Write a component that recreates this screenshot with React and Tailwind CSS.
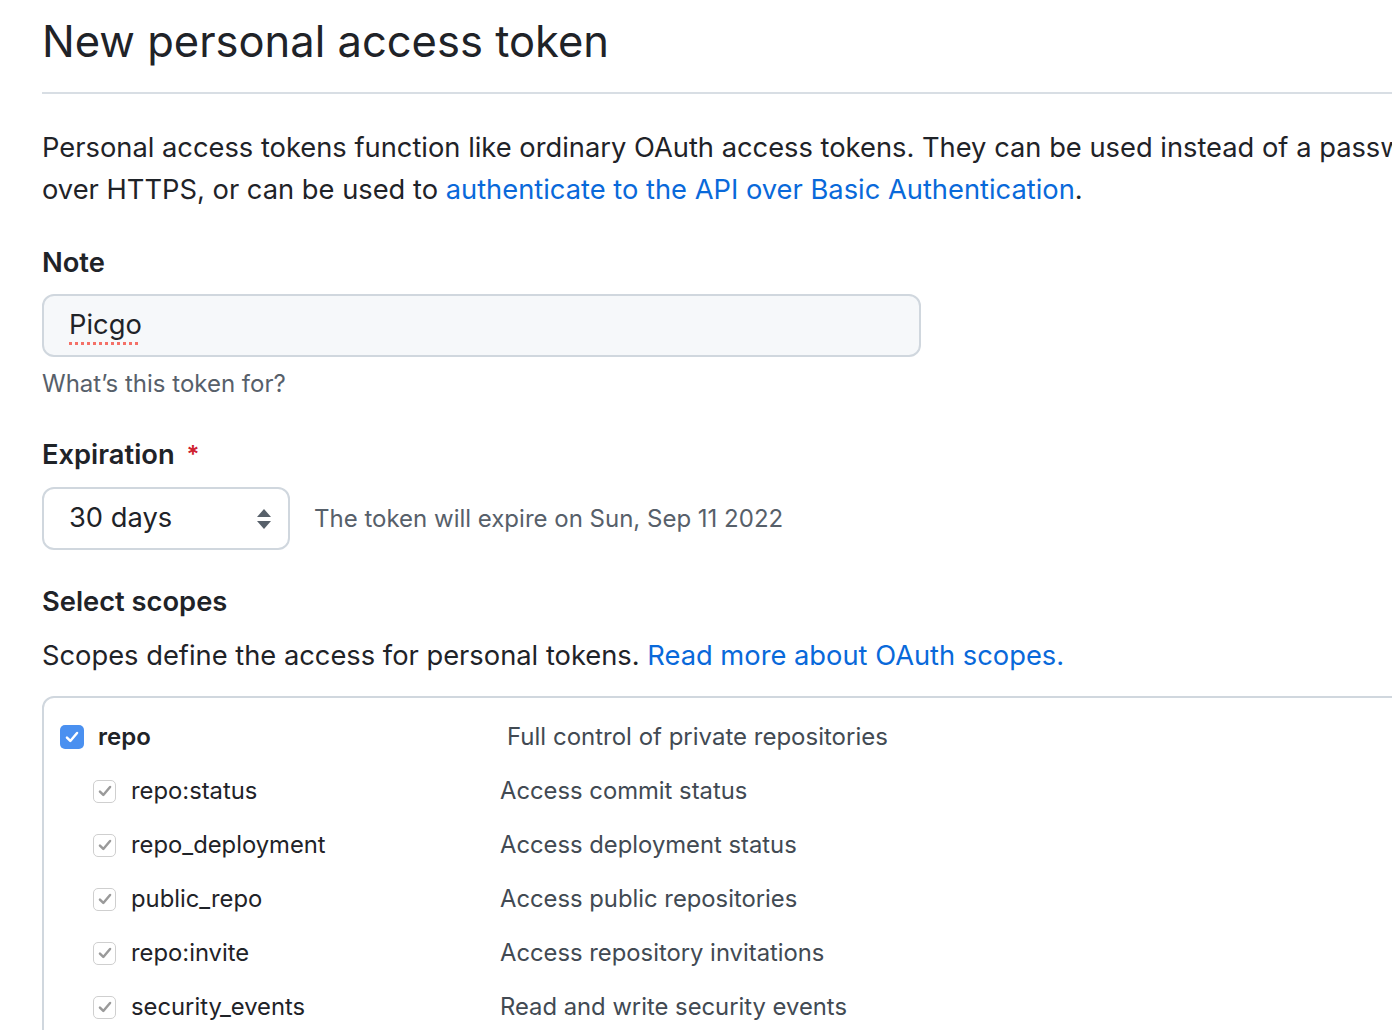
const scopes = [
  { name: 'repo:status', desc: 'Access commit status' },
  { name: 'repo_deployment', desc: 'Access deployment status' },
  { name: 'public_repo', desc: 'Access public repositories' },
  { name: 'repo:invite', desc: 'Access repository invitations' },
  { name: 'security_events', desc: 'Read and write security events' },
];

const Check = ({ className, width = 1.8 }) => (
  <svg viewBox="0 0 16 16" className={className} fill="none" stroke="currentColor" strokeWidth={width} strokeLinecap="round" strokeLinejoin="round">
    <path d="M3.5 8.5l3 3 6-7" />
  </svg>
);

const App = () => {
  return (
    <div className="w-[1392px] h-[1030px] overflow-hidden bg-white text-[#1f2328]" style={{ fontFamily: 'Inter, "Liberation Sans", sans-serif' }}>
      <div className="w-[1500px] pl-[42px]">
        <div className="border-b-2 border-[#d8dee4] pb-[22px] pt-[12px]">
          <h1 className="text-[43.5px] leading-[58px] font-normal">New personal access token</h1>
        </div>

        <p className="mt-[33px] text-[27.3px] leading-[42px] whitespace-nowrap">
          Personal access tokens function like ordinary OAuth access tokens. They can be used instead of a password for Git
          <br />
          over HTTPS, or can be used to <span className="text-[#0969da]">authenticate to the API over Basic Authentication</span>.
        </p>

        <div className="mt-[32px] text-[27.3px] leading-[40px] font-semibold">Note</div>
        <div className="mt-[11px] w-[879px] h-[63px] rounded-[12px] border-2 border-[#d0d7de] bg-[#f6f8fa] flex items-center px-[25px]">
          <span className="text-[27.3px] underline decoration-dotted decoration-[#f47067] decoration-[3px] underline-offset-[8px]">Picgo</span>
        </div>
        <div className="mt-[10px] text-[24px] leading-[34px] text-[#57606a]">What’s this token for?</div>

        <div className="mt-[34px] flex items-center text-[27.3px] leading-[40px] font-semibold">
          Expiration <span className="ml-[12px] text-[#cf222e] text-[24px]">*</span>
        </div>
        <div className="mt-[12px] flex items-center">
          <div className="w-[248px] h-[63px] rounded-[12px] border-2 border-[#d0d7de] bg-white flex items-center justify-between pl-[25px] pr-[16px]">
            <span className="text-[27.3px]">30 days</span>
            <div className="flex flex-col items-center text-[#57606a]">
              <svg width="16" height="10" viewBox="0 0 16 10"><path d="M8 1L15 9H1z" fill="currentColor" /></svg>
              <svg width="16" height="10" viewBox="0 0 16 10" className="mt-[2px]"><path d="M8 9L1 1H15z" fill="currentColor" /></svg>
            </div>
          </div>
          <span className="ml-[24px] text-[24px] text-[#57606a]">The token will expire on Sun, Sep 11 2022</span>
        </div>

        <div className="mt-[32px] text-[27.3px] leading-[40px] font-semibold">Select scopes</div>
        <p className="mt-[13px] text-[27.3px] leading-[42px] whitespace-nowrap">
          Scopes define the access for personal tokens. <span className="text-[#0969da]">Read more about OAuth scopes.</span>
        </p>

        <div className="mt-[19px] border-2 border-[#d0d7de] rounded-tl-[12px] pt-[19px]">
          <div className="flex items-center h-[40px] pl-[16px]">
            <div className="w-[24px] h-[24px] rounded-[5px] bg-[#4a90f0] flex items-center justify-center">
              <Check className="w-[18px] h-[18px] text-white" width={2.2} />
            </div>
            <span className="ml-[14px] w-[409px] text-[24px] font-semibold">repo</span>
            <span className="text-[24px] text-[#424a53]">Full control of private repositories</span>
          </div>
          {scopes.map((s) => (
            <div key={s.name} className="flex items-center h-[40px] mt-[14px] pl-[49px]">
              <div className="w-[23px] h-[23px] rounded-[5px] border border-[#cfcfcf] bg-white flex items-center justify-center">
                <Check className="w-[18px] h-[18px] text-[#9a9a9a]" width={2.2} />
              </div>
              <span className="ml-[15px] w-[369px] text-[23.8px]">{s.name}</span>
              <span className="text-[23.8px] text-[#424a53]">{s.desc}</span>
            </div>
          ))}
          <div className="h-[40px]" />
        </div>
      </div>
    </div>
  );
};

export default App;
